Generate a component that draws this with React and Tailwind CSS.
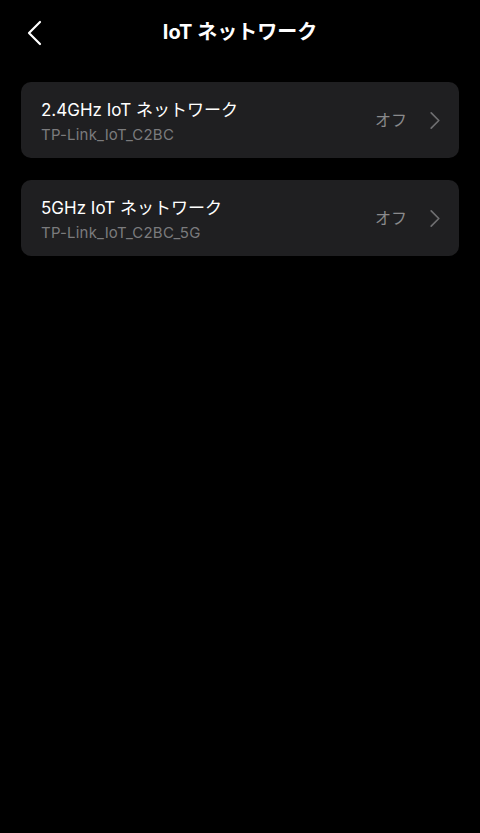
import React from 'react';

const font = { fontFamily: '"Inter", "Noto Sans CJK JP", sans-serif' };

const networks = [
  { name: '2.4GHz IoT ネットワーク', ssid: 'TP-Link_IoT_C2BC' },
  { name: '5GHz IoT ネットワーク', ssid: 'TP-Link_IoT_C2BC_5G' },
];

const Chevron = ({ className, width = 2 }) => (
  <svg viewBox="0 0 12 20" className={className} fill="none" stroke="currentColor" strokeWidth={width} strokeLinecap="round" strokeLinejoin="round">
    <path d="M2 2l8 8-8 8" />
  </svg>
);

const NetworkRow = ({ item }) => (
  <div className="h-[76px] rounded-[10px] bg-[#1f1f21] flex items-center pl-[20px] pr-[18px]">
    <div className="flex-1 flex flex-col gap-[5px] pt-[2px]">
      <span className="text-[17px] leading-[22px] text-white">{item.name}</span>
      <span className="text-[15px] leading-[18px] text-[#7b7b7d] tracking-[0.2px]">{item.ssid}</span>
    </div>
    <span className="text-[16px] text-[#8a8a8c] mr-[22px]">オフ</span>
    <Chevron className="w-[12px] h-[19px] text-[#6e6e70]" width={1.8} />
  </div>
);

export default function App() {
  return (
    <div className="min-h-[833px] w-[480px] bg-black" style={font}>
      <div className="h-[64px] flex items-center relative">
        <svg viewBox="0 0 16 26" className="absolute left-[26px] top-[20px] w-[16px] h-[26px] text-white" fill="none" stroke="currentColor" strokeWidth="2.2" strokeLinecap="round" strokeLinejoin="round">
          <path d="M14 2L3 13l11 11" />
        </svg>
        <h1 className="w-full text-center text-[20px] font-bold text-white">IoT ネットワーク</h1>
      </div>
      <div className="px-[21px] pt-[18px] flex flex-col gap-[22px]">
        {networks.map((n) => (
          <NetworkRow key={n.ssid} item={n} />
        ))}
      </div>
    </div>
  );
}
